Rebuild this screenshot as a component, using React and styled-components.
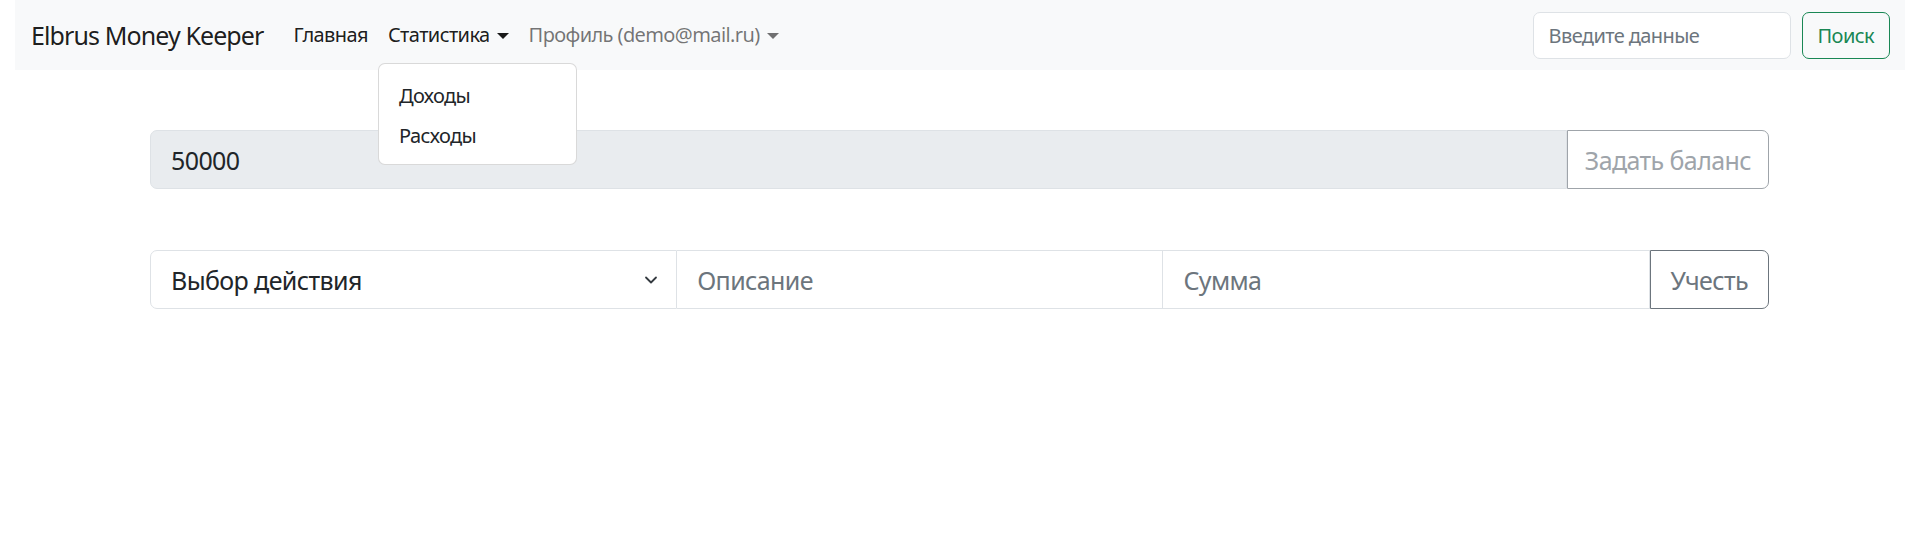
import React from "react";
import styled, { createGlobalStyle } from "styled-components";

const GlobalStyle = createGlobalStyle`
  body {
    margin: 0;
    background: #fff;
    font-family: "Noto Sans", "Open Sans", sans-serif;
    font-size: 20px;
    letter-spacing: -0.03em;
    color: #212529;
  }
  * { box-sizing: border-box; }
  input, button { letter-spacing: inherit; }
`;

const Header = styled.div`
  padding: 0 15px;
`;

const Navbar = styled.nav`
  height: 70px;
  background: #f8f9fa;
  display: flex;
  align-items: center;
  padding: 0 15px 0 16px;
`;

const Brand = styled.div`
  font-size: 25px;
  letter-spacing: -0.036em;
  color: rgba(0, 0, 0, 0.9);
  margin-right: 20px;
  white-space: nowrap;
`;

const NavList = styled.div`
  display: flex;
  align-items: center;
  flex: 1;
`;

const NavItem = styled.div`
  position: relative;
`;

const NavLink = styled.div`
  padding: 10px;
  line-height: 30px;
  font-size: 20px;
  color: ${(p) => (p.muted ? "rgba(0,0,0,.55)" : "rgba(0,0,0,.9)")};
  display: flex;
  align-items: center;
  white-space: nowrap;
`;

const Caret = styled.span`
  display: inline-block;
  margin-left: 7px;
  border-top: 6px solid currentColor;
  border-left: 6px solid transparent;
  border-right: 6px solid transparent;
  margin-top: 2px;
`;

const Menu = styled.div`
  position: absolute;
  top: 53px;
  left: 0;
  width: 199px;
  padding: 12px 0 8px;
  background: #fff;
  border: 1px solid rgba(0, 0, 0, 0.15);
  border-radius: 7px;
  z-index: 10;
`;

const MenuItem = styled.div`
  padding: 5px 20px;
  line-height: 30px;
  font-size: 20px;
  color: #212529;
`;

const SearchForm = styled.form`
  display: flex;
  align-items: center;
  margin: 0;
`;

const SearchInput = styled.input`
  width: 258px;
  height: 47px;
  padding: 0 15px;
  font: inherit;
  font-size: 20px;
  color: #212529;
  background: #fff;
  border: 1px solid #dee2e6;
  border-radius: 7px;
  margin-right: 11px;
  outline: none;
  &::placeholder { color: #6c757d; }
`;

const SearchButton = styled.button`
  height: 47px;
  padding: 0 15px;
  font: inherit;
  font-size: 20px;
  color: #198754;
  background: transparent;
  border: 1px solid #198754;
  border-radius: 7px;
`;

const Main = styled.main`
  padding: 60px 151px 0 150px;
  display: flex;
  flex-direction: column;
  gap: 61px;
`;

const Group = styled.div`
  display: grid;
  grid-template-columns: ${(p) => p.cols};
  height: 59px;
`;

const Field = styled.input`
  min-width: 0;
  height: 100%;
  padding: 0 20px;
  font: inherit;
  font-size: 25px;
  color: #212529;
  background: ${(p) => (p.disabled ? "#e9ecef" : "#fff")};
  border: 1px solid #dee2e6;
  border-left-width: ${(p) => (p.first ? "1px" : "0")};
  border-radius: ${(p) => (p.first ? "7px 0 0 7px" : "0")};
  outline: none;
  &::placeholder { color: #6c757d; }
  &:disabled { color: #212529; opacity: 1; }
`;

const SelectBox = styled.div`
  position: relative;
  height: 100%;
  display: flex;
  align-items: center;
  padding: 0 20px;
  font-size: 25px;
  color: #212529;
  background: #fff;
  border: 1px solid #dee2e6;
  border-radius: 7px 0 0 7px;
  svg {
    position: absolute;
    right: 17px;
    top: 50%;
    margin-top: -8px;
  }
`;

const GroupButton = styled.button`
  height: 100%;
  padding: 0 ${(p) => (p.disabled ? "17px" : "20px")};
  font: inherit;
  font-size: 25px;
  white-space: nowrap;
  color: #6c757d;
  background: #fff;
  border: 1px solid #6c757d;
  border-radius: 0 7px 7px 0;
  opacity: ${(p) => (p.disabled ? 0.65 : 1)};
`;

export default function App() {
  return (
    <>
      <GlobalStyle />
      <Header>
        <Navbar>
          <Brand>Elbrus Money Keeper</Brand>
          <NavList>
            <NavItem>
              <NavLink>Главная</NavLink>
            </NavItem>
            <NavItem>
              <NavLink>
                Статистика
                <Caret />
              </NavLink>
              <Menu>
                <MenuItem>Доходы</MenuItem>
                <MenuItem>Расходы</MenuItem>
              </Menu>
            </NavItem>
            <NavItem>
              <NavLink muted>
                Профиль (demo@mail.ru)
                <Caret />
              </NavLink>
            </NavItem>
          </NavList>
          <SearchForm onSubmit={(e) => e.preventDefault()}>
            <SearchInput placeholder="Введите данные" />
            <SearchButton type="submit">Поиск</SearchButton>
          </SearchForm>
        </Navbar>
      </Header>
      <Main>
        <Group cols="1fr auto">
          <Field first disabled value="50000" readOnly />
          <GroupButton disabled>Задать баланс</GroupButton>
        </Group>
        <Group cols="528fr 487fr 487fr auto">
          <SelectBox>
            Выбор действия
            <svg width="16" height="16" viewBox="0 0 16 16" fill="none">
              <path
                d="M3 5.5l5 5 5-5"
                stroke="#343a40"
                strokeWidth="1.8"
                strokeLinecap="round"
                strokeLinejoin="round"
              />
            </svg>
          </SelectBox>
          <Field placeholder="Описание" />
          <Field placeholder="Сумма" />
          <GroupButton>Учесть</GroupButton>
        </Group>
      </Main>
    </>
  );
}
